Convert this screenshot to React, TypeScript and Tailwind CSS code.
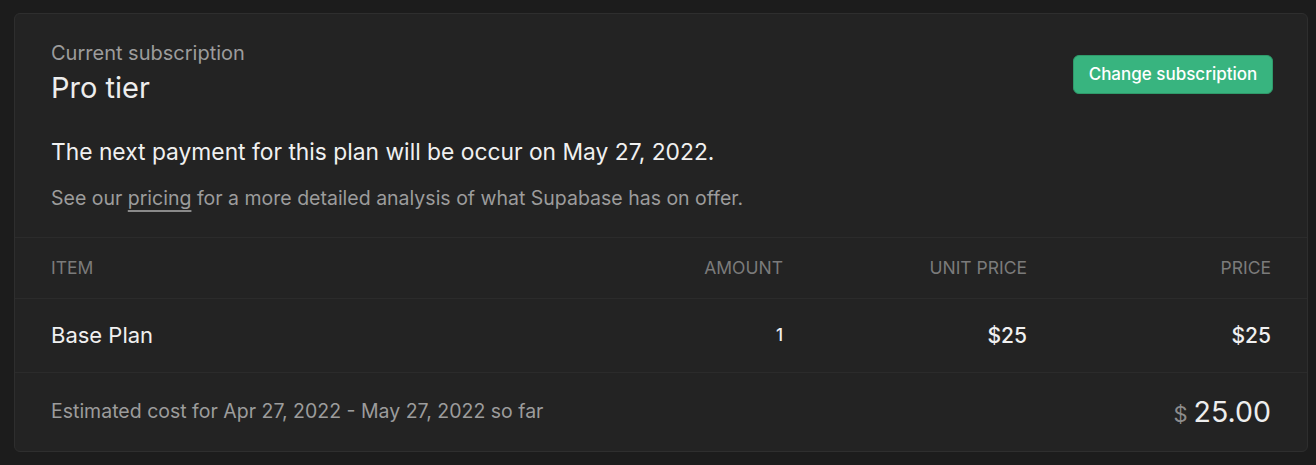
export default function App() {
  return (
    <div className="min-h-[465px] bg-[#1c1c1c] pt-[13px] pr-[8px] pb-[13px] pl-[14px] font-['Inter',sans-serif]">
      <div className="rounded-md border border-[#2e2e2e] bg-[#232323]">
        {/* Summary */}
        <div className="px-9 pt-[25px] pb-[25px]">
          <div className="flex items-start justify-between">
            <div>
              <p className="text-[20px] leading-7 text-[#9c9c9c]">Current subscription</p>
              <h2 className="mt-[3px] text-[29px] leading-9 text-[#ededed]">Pro tier</h2>
            </div>
            <button className="mt-[16px] -mr-[2px] h-[39px] w-[200px] rounded-md border border-[#2f9a6a] bg-[#38b47f] text-[17px] font-medium text-white">
              Change subscription
            </button>
          </div>
          <p className="mt-[30px] text-[22.8px] leading-8 text-[#f0f0f0]">
            The next payment for this plan will be occur on May 27, 2022.
          </p>
          <p className="mt-[16px] text-[19.5px] leading-7 text-[#9c9c9c]">
            See our{" "}
            <a href="#" className="underline decoration-[#8a8a8a] decoration-2 underline-offset-[5px]">
              pricing
            </a>{" "}
            for a more detailed analysis of what Supabase has on offer.
          </p>
        </div>

        {/* Table */}
        <div className="grid h-[61px] grid-cols-[2fr_1fr_1fr_1fr] items-center border-t border-[#2b2b2b] px-9 text-[17.5px] uppercase text-[#7b7b7b]">
          <span>Item</span>
          <span className="text-right">Amount</span>
          <span className="text-right">Unit price</span>
          <span className="text-right">Price</span>
        </div>
        <div className="grid h-[74px] grid-cols-[2fr_1fr_1fr_1fr] items-center border-t border-[#2b2b2b] px-9 text-[#f0f0f0]">
          <span className="text-[22px]">Base Plan</span>
          <span className="text-right text-[17px] font-medium">1</span>
          <span className="text-right text-[21px] font-medium">$25</span>
          <span className="text-right text-[21px] font-medium">$25</span>
        </div>

        {/* Estimate */}
        <div className="flex h-[79px] items-center justify-between border-t border-[#2b2b2b] px-9">
          <span className="text-[19.5px] text-[#9c9c9c]">Estimated cost for Apr 27, 2022 - May 27, 2022 so far</span>
          <span className="flex items-baseline gap-[6px]">
            <span className="text-[22px] text-[#8c8c8c]">$</span>
            <span className="text-[28.5px] text-[#ededed]">25.00</span>
          </span>
        </div>
      </div>
    </div>
  );
}
